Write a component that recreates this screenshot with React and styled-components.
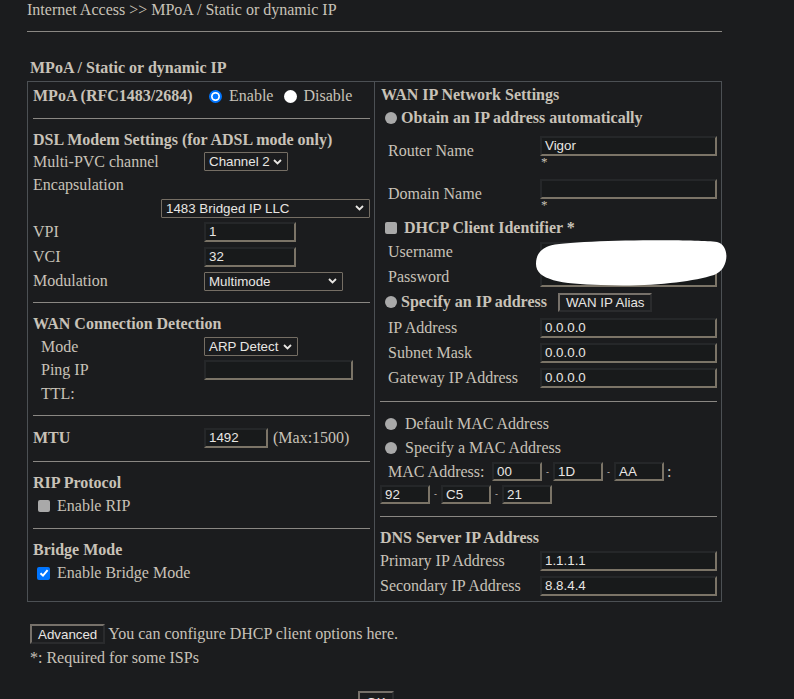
import React from "react";
import styled, { createGlobalStyle } from "styled-components";

const GlobalStyle = createGlobalStyle`
	html, body {
		margin: 0;
		padding: 0;
		background-color: #1b1c1e;
	}
	body {
		font-family: "Liberation Serif", "Times New Roman", serif;
		font-size: 16px;
		color: #c8c2b8;
	}
`;

const Page = styled.div`
	padding-left: 27px;
	width: 695px;
`;

const Crumb = styled.div`
	height: 20px;
	line-height: 20px;
	margin-bottom: 11px;
`;

const Rule = styled.div`
	height: 1px;
	background-color: #8a8783;
`;

const Title = styled.div`
	font-weight: bold;
	height: 22px;
	line-height: 22px;
	margin: 25px 0 2px 3px;
`;

const Table = styled.div`
	position: relative;
	display: flex;
	border: 1px solid #4c5054;
	height: 519px;
`;

const Column = styled.div`
	flex: 1;
	display: flex;
	flex-direction: column;
	padding: 2px 4px 0 5px;
	border-left: ${(p) => (p.$divided ? "1px solid #4c5054" : "none")};
`;

const Divider = styled.div`
	height: 1px;
	background-color: #8a8783;
	margin: ${(p) => p.$top || 10}px 0 ${(p) => p.$bottom || 10}px 0;
`;

const Row = styled.div`
	display: flex;
	align-items: center;
	height: ${(p) => p.$h || 24}px;
	padding-left: ${(p) => p.$indent || 0}px;
	justify-content: ${(p) => (p.$end ? "flex-end" : "flex-start")};
	white-space: nowrap;
`;

const Label = styled.span`
	display: inline-block;
	width: ${(p) => p.$w || 171}px;
	flex-shrink: 0;
`;

const Heading = styled.span`
	font-weight: bold;
`;

const Note = styled.span`
	margin-left: ${(p) => p.$gap || 5}px;
`;

const Field = styled.div`
	box-sizing: border-box;
	width: ${(p) => p.$w}px;
	height: ${(p) => p.$h || 20}px;
	background-color: #181a1b;
	border-style: solid;
	border-width: 2px;
	border-color: #252729 #7b7467 #7b7467 #252729;
	padding: 0 3px;
	font-family: "Liberation Sans", Arial, sans-serif;
	font-size: 13.33px;
	line-height: 16px;
	color: #e8e6e3;
	flex-shrink: 0;
`;

const Select = styled.div`
	box-sizing: border-box;
	width: ${(p) => p.$w}px;
	height: 19px;
	display: flex;
	align-items: center;
	justify-content: space-between;
	border: 1px solid #756e64;
	border-radius: 1px;
	padding: 0 5px 0 4px;
	font-family: "Liberation Sans", Arial, sans-serif;
	font-size: 13.33px;
	color: #e8e6e3;
	flex-shrink: 0;
`;

const Chevron = () => (
	<svg width="9" height="6" viewBox="0 0 9 6">
		<path d="M1 1 L4.5 4.5 L8 1" fill="none" stroke="#e8e6e3" strokeWidth="1.8" />
	</svg>
);

const Button = styled.div`
	box-sizing: border-box;
	display: inline-flex;
	align-items: center;
	height: ${(p) => p.$h || 20}px;
	padding: 0 6px;
	background-color: #1c1d1f;
	border-style: solid;
	border-width: 2px;
	border-color: #77716a #2a2b2d #2a2b2d #77716a;
	font-family: "Liberation Sans", Arial, sans-serif;
	font-size: 13.33px;
	color: #e8e6e3;
	flex-shrink: 0;
`;

const Radio = styled.span`
	display: inline-block;
	box-sizing: border-box;
	width: ${(p) => (p.$dim ? 12 : 13)}px;
	height: ${(p) => (p.$dim ? 12 : 13)}px;
	border-radius: 50%;
	flex-shrink: 0;
	margin-right: ${(p) => p.$gap || 6}px;
	background: ${(p) =>
		p.$on
			? "radial-gradient(circle, #0075ff 0 2.6px, #ffffff 3.2px)"
			: p.$dim
			? "#a9a9a9"
			: "#ffffff"};
	border: ${(p) => (p.$on ? "2px solid #0075ff" : "none")};
`;

const Box = styled.span`
	display: inline-flex;
	align-items: center;
	justify-content: center;
	width: ${(p) => (p.$on ? 13 : 12)}px;
	height: ${(p) => (p.$on ? 13 : 12)}px;
	border-radius: 2px;
	flex-shrink: 0;
	margin-right: ${(p) => p.$gap || 7}px;
	background-color: ${(p) => (p.$on ? "#0075ff" : "#a9a9a9")};
`;

const Tick = () => (
	<svg width="10" height="10" viewBox="0 0 10 10">
		<path d="M1.5 5.2 L4 7.6 L8.6 2.2" fill="none" stroke="#fff" strokeWidth="2" />
	</svg>
);

const FieldCell = styled.div`
	display: flex;
	flex-direction: column;
	padding-top: 2px;
`;

const Star = styled.span`
	height: 12px;
	line-height: 12px;
	padding-left: 1px;
	font-size: 13px;
`;

const Sep = styled.span`
	display: inline-block;
	width: 11px;
	text-align: center;
	font-size: 9px;
	font-family: "Liberation Sans", Arial, sans-serif;
	color: #c8c2b8;
`;

const Blot = styled.svg`
	position: absolute;
	left: 508px;
	top: 155px;
`;

const Footer = styled.div`
	padding-left: 3px;
`;

const FootRow = styled.div`
	display: flex;
	align-items: center;
	height: ${(p) => p.$h || 24}px;
	margin-top: ${(p) => p.$top || 0}px;
	justify-content: ${(p) => (p.$center ? "center" : "flex-start")};
`;

const macTop = ["00", "1D", "AA"];
const macBottom = ["92", "C5", "21"];

function App() {
	return (
		<Page>
			<GlobalStyle />
			<Crumb>Internet Access &gt;&gt; MPoA / Static or dynamic IP</Crumb>
			<Rule />
			<Title>MPoA / Static or dynamic IP</Title>
			<Table>
				<Column>
					<Row $h={24}>
						<Label $w={176}>
							<Heading>MPoA (RFC1483/2684)</Heading>
						</Label>
						<Radio $on $gap={7} />
						<span>Enable</span>
						<Radio $gap={6} style={{ marginLeft: 11 }} />
						<span>Disable</span>
					</Row>
					<Divider $top={10} $bottom={10} />
					<Row $h={22}>
						<Heading>DSL Modem Settings (for ADSL mode only)</Heading>
					</Row>
					<Row $h={21}>
						<Label>Multi-PVC channel</Label>
						<Select $w={84}>
							Channel 2 <Chevron />
						</Select>
					</Row>
					<Row $h={25}>
						<Label>Encapsulation</Label>
					</Row>
					<Row $h={22} $end>
						<Select $w={209}>
							1483 Bridged IP LLC <Chevron />
						</Select>
					</Row>
					<Row $h={25}>
						<Label>VPI</Label>
						<Field $w={92}>1</Field>
					</Row>
					<Row $h={25}>
						<Label>VCI</Label>
						<Field $w={92}>32</Field>
					</Row>
					<Row $h={24}>
						<Label>Modulation</Label>
						<Select $w={139}>
							Multimode <Chevron />
						</Select>
					</Row>
					<Divider $top={9} $bottom={10} />
					<Row $h={22}>
						<Heading>WAN Connection Detection</Heading>
					</Row>
					<Row $h={23} $indent={8}>
						<Label $w={163}>Mode</Label>
						<Select $w={94}>
							ARP Detect <Chevron />
						</Select>
					</Row>
					<Row $h={24} $indent={8}>
						<Label $w={163}>Ping IP</Label>
						<Field $w={149}></Field>
					</Row>
					<Row $h={23} $indent={8}>
						<Label $w={163}>TTL:</Label>
					</Row>
					<Divider $top={10} $bottom={10} />
					<Row $h={24}>
						<Label>
							<Heading>MTU</Heading>
						</Label>
						<Field $w={64}>1492</Field>
						<Note>(Max:1500)</Note>
					</Row>
					<Divider $top={11} $bottom={10} />
					<Row $h={22}>
						<Heading>RIP Protocol</Heading>
					</Row>
					<Row $h={24} $indent={5}>
						<Box $gap={7} />
						<span>Enable RIP</span>
					</Row>
					<Divider $top={10} $bottom={10} />
					<Row $h={22}>
						<Heading>Bridge Mode</Heading>
					</Row>
					<Row $h={24} $indent={4}>
						<Box $on $gap={7}>
							<Tick />
						</Box>
						<span>Enable Bridge Mode</span>
					</Row>
				</Column>

				<Column $divided>
					<Row $h={22} $indent={1}>
						<Heading>WAN IP Network Settings</Heading>
					</Row>
					<Row $h={24} $indent={5}>
						<Radio $dim $gap={4} />
						<Heading>Obtain an IP address automatically</Heading>
					</Row>
					<Row $h={42} $indent={8}>
						<Label $w={152}>Router Name</Label>
						<FieldCell>
							<Field $w={177}>Vigor</Field>
							<Star>*</Star>
						</FieldCell>
					</Row>
					<Row $h={44} $indent={8}>
						<Label $w={152}>Domain Name</Label>
						<FieldCell>
							<Field $w={177}></Field>
							<Star>*</Star>
						</FieldCell>
					</Row>
					<Row $h={24} $indent={5}>
						<Box $gap={7} />
						<Heading>DHCP Client Identifier *</Heading>
					</Row>
					<Row $h={24} $indent={8}>
						<Label $w={152}>Username</Label>
						<Field $w={177}></Field>
					</Row>
					<Row $h={25} $indent={8}>
						<Label $w={152}>Password</Label>
						<Field $w={177}></Field>
					</Row>
					<Row $h={26} $indent={5}>
						<Radio $dim $gap={4} />
						<Heading>Specify an IP address</Heading>
						<Button $h={19} style={{ marginLeft: 11 }}>
							WAN IP Alias
						</Button>
					</Row>
					<Row $h={25} $indent={8}>
						<Label $w={152}>IP Address</Label>
						<Field $w={177}>0.0.0.0</Field>
					</Row>
					<Row $h={25} $indent={8}>
						<Label $w={152}>Subnet Mask</Label>
						<Field $w={177}>0.0.0.0</Field>
					</Row>
					<Row $h={25} $indent={8}>
						<Label $w={152}>Gateway IP Address</Label>
						<Field $w={177}>0.0.0.0</Field>
					</Row>
					<Divider $top={11} $bottom={10} />
					<Row $h={24} $indent={5}>
						<Radio $dim $gap={8} />
						<span>Default MAC Address</span>
					</Row>
					<Row $h={24} $indent={5}>
						<Radio $dim $gap={8} />
						<span>Specify a MAC Address</span>
					</Row>
					<Row $h={23} $indent={8}>
						<Label $w={104}>MAC Address:</Label>
						{macTop.map((v, i) => (
							<React.Fragment key={v}>
								{i > 0 && <Sep>-</Sep>}
								<Field $w={50} $h={19}>
									{v}
								</Field>
							</React.Fragment>
						))}
						<Note $gap={3}>:</Note>
					</Row>
					<Row $h={22}>
						{macBottom.map((v, i) => (
							<React.Fragment key={v}>
								{i > 0 && <Sep>-</Sep>}
								<Field $w={50} $h={19}>
									{v}
								</Field>
							</React.Fragment>
						))}
					</Row>
					<Divider $top={11} $bottom={10} />
					<Row $h={22}>
						<Heading>DNS Server IP Address</Heading>
					</Row>
					<Row $h={24}>
						<Label $w={160}>Primary IP Address</Label>
						<Field $w={177}>1.1.1.1</Field>
					</Row>
					<Row $h={26}>
						<Label $w={160}>Secondary IP Address</Label>
						<Field $w={177}>8.8.4.4</Field>
					</Row>
				</Column>

				<Blot width="195" height="52" viewBox="535 236 195 52">
					<path
						d="M548 245 C565 239 690 238 716 241 C729 244 729 268 713 274 C690 281 650 286 600 284 C560 283 535 279 535 263 C535 253 540 248 548 245 Z"
						fill="#ffffff"
					/>
				</Blot>
			</Table>

			<Footer>
				<FootRow $h={20} $top={22}>
					<Button>Advanced</Button>
					<Note $gap={3}>You can configure DHCP client options here.</Note>
				</FootRow>
				<FootRow $h={24} $top={2}>
					*: Required for some ISPs
				</FootRow>
				<FootRow $h={22} $top={21} $center>
					<Button $h={22}>OK</Button>
				</FootRow>
			</Footer>
		</Page>
	);
}

export default App;
